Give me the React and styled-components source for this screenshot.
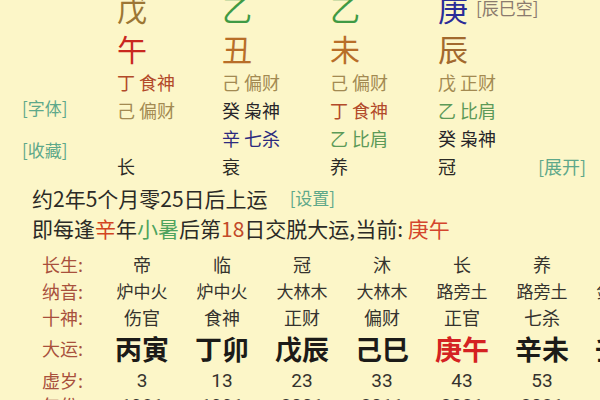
import styled, { createGlobalStyle } from "styled-components";

const Global = createGlobalStyle`
  html, body {
    margin: 0;
    padding: 0;
    background: #fcf6c8;
  }
  body {
    font-family: "Noto Sans CJK SC", "Noto Sans", sans-serif;
    color: #2b2a26;
  }
`;

const Page = styled.div`
  width: 600px;
  height: 400px;
  overflow: hidden;
  background: #fcf6c8;
`;

const Chart = styled.div`
  display: grid;
  grid-template-columns: 117px 105px 108px 108px 100px 1fr;
  grid-template-rows: 40px 40px 28px 28px 28px 28px;
  margin-top: -12px;
`;

const Side = styled.div`
  grid-column: 1;
  grid-row: 3 / 7;
  display: flex;
  flex-direction: column;
  gap: 22px;
  padding: 30px 0 0 22px;
`;

const Link = styled.span`
  font-size: ${(p) => p.size || 17}px;
  line-height: 20px;
  color: ${(p) => p.color || "#5ea88a"};
  white-space: nowrap;
`;

const Big = styled.div`
  grid-column: ${(p) => p.col};
  grid-row: ${(p) => p.row};
  display: flex;
  align-items: center;
  gap: 8px;
  font-size: 30px;
  line-height: 40px;
  color: ${(p) => p.color};
`;

const Cell = styled.div`
  grid-column: ${(p) => p.col};
  grid-row: ${(p) => p.row};
  font-size: 18px;
  line-height: 28px;
  color: ${(p) => p.color || "#2b2a26"};
  white-space: nowrap;
`;

const Expand = styled.div`
  grid-column: 6;
  grid-row: 6;
  display: flex;
  align-items: center;
`;

const Line = styled.div`
  padding-left: 32px;
  font-size: 21px;
  line-height: 30px;
  white-space: nowrap;
  display: flex;
  align-items: center;
  margin-top: ${(p) => p.mt || 0}px;
`;

const Em = styled.span`
  color: ${(p) => p.color};
`;

const Table = styled.div`
  display: grid;
  grid-template-columns: 60px repeat(7, 80px);
  grid-template-rows: 26px 27px 25px 38px 26px 24px;
  padding-left: 42px;
  margin-top: 8px;
`;

const Label = styled.div`
  grid-column: 1;
  grid-row: ${(p) => p.row};
  font-size: 18px;
  color: #a8503c;
  display: flex;
  align-items: center;
  white-space: nowrap;
`;

const Val = styled.div`
  grid-column: ${(p) => p.col};
  grid-row: ${(p) => p.row};
  display: flex;
  align-items: center;
  justify-content: center;
  white-space: nowrap;
  font-size: ${(p) => p.size || 18}px;
  font-weight: ${(p) => p.weight || 400};
  color: ${(p) => p.color || "#35332e"};
  font-family: ${(p) =>
    p.num ? '"Roboto", "Noto Sans CJK SC", sans-serif' : "inherit"};
`;

const pillars = [
  {
    stem: "戊",
    stemColor: "#9c7634",
    branch: "午",
    branchColor: "#c9281f",
    hidden: [
      ["丁 食神", "#b24a2a"],
      ["己 偏财", "#a38a52"],
    ],
    life: "长",
  },
  {
    stem: "乙",
    stemColor: "#3f9a44",
    branch: "丑",
    branchColor: "#b86e28",
    hidden: [
      ["己 偏财", "#a38a52"],
      ["癸 枭神", "#26252a"],
      ["辛 七杀", "#2c2a7e"],
    ],
    life: "衰",
  },
  {
    stem: "乙",
    stemColor: "#3f9a44",
    branch: "未",
    branchColor: "#b86e28",
    hidden: [
      ["己 偏财", "#a38a52"],
      ["丁 食神", "#b24a2a"],
      ["乙 比肩", "#5c9a58"],
    ],
    life: "养",
  },
  {
    stem: "庚",
    stemColor: "#2a2b98",
    branch: "辰",
    branchColor: "#a2692e",
    hidden: [
      ["戊 正财", "#a38a52"],
      ["乙 比肩", "#5c9a58"],
      ["癸 枭神", "#26252a"],
    ],
    life: "冠",
    note: "[辰巳空]",
  },
];

const luck = [
  ["帝", "炉中火", "伤官", "丙寅", "3", "1981"],
  ["临", "炉中火", "食神", "丁卯", "13", "1991"],
  ["冠", "大林木", "正财", "戊辰", "23", "2001"],
  ["沐", "大林木", "偏财", "己巳", "33", "2011"],
  ["长", "路旁土", "正官", "庚午", "43", "2021", true],
  ["养", "路旁土", "七杀", "辛未", "53", "2031"],
  ["胎", "剑锋金", "正印", "壬申", "63", "2041"],
];

const labels = ["长生:", "纳音:", "十神:", "大运:", "虚岁:", "年份:"];

export default function App() {
  return (
    <Page>
      <Global />
      <Chart>
        {pillars.map((p, i) => (
          <Big key={"s" + i} col={i + 2} row={1} color={p.stemColor}>
            {p.stem}
            {p.note && (
              <Link color="#8b7b6e" size={17}>
                {p.note}
              </Link>
            )}
          </Big>
        ))}
        {pillars.map((p, i) => (
          <Big key={"b" + i} col={i + 2} row={2} color={p.branchColor}>
            {p.branch}
          </Big>
        ))}
        {pillars.map((p, i) =>
          p.hidden.map(([t, c], j) => (
            <Cell key={"h" + i + j} col={i + 2} row={j + 3} color={c}>
              {t}
            </Cell>
          ))
        )}
        {pillars.map((p, i) => (
          <Cell key={"l" + i} col={i + 2} row={6}>
            {p.life}
          </Cell>
        ))}
        <Side>
          <Link>[字体]</Link>
          <Link>[收藏]</Link>
        </Side>
        <Expand>
          <Link size={18}>[展开]</Link>
        </Expand>
      </Chart>

      <Line mt={3}>
        约2年5个月零25日后上运
        <Link size={17} style={{ marginLeft: 22 }}>
          [设置]
        </Link>
      </Line>
      <Line>
        即每逢<Em color="#d2441f">辛</Em>年<Em color="#4ea35e">小暑</Em>后第
        <Em color="#c24a2a">18</Em>日交脱大运,当前:&nbsp;
        <Em color="#d4452c">庚午</Em>
      </Line>

      <Table>
        {labels.map((l, r) => (
          <Label key={l} row={r + 1}>
            {l}
          </Label>
        ))}
        {luck.map((c, i) => [
          <Val key={i + "a"} row={1} col={i + 2}>
            {c[0]}
          </Val>,
          <Val key={i + "b"} row={2} col={i + 2} size={17}>
            {c[1]}
          </Val>,
          <Val key={i + "c"} row={3} col={i + 2}>
            {c[2]}
          </Val>,
          <Val
            key={i + "d"}
            row={4}
            col={i + 2}
            size={27}
            weight={700}
            color={c[6] ? "#d42222" : "#1c1b18"}
          >
            {c[3]}
          </Val>,
          <Val key={i + "e"} row={5} col={i + 2} num size={19}>
            {c[4]}
          </Val>,
          <Val key={i + "f"} row={6} col={i + 2} num size={19}>
            {c[5]}
          </Val>,
        ])}
      </Table>
    </Page>
  );
}
